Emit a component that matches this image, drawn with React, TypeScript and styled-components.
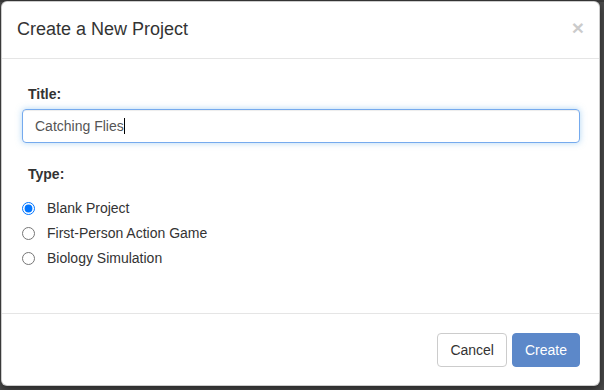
import React from 'react';
import styled, { createGlobalStyle } from 'styled-components';

const GlobalStyle = createGlobalStyle`
  html, body {
    margin: 0;
    padding: 0;
    background: #474747;
    font-family: "Liberation Sans", Arial, sans-serif;
  }
`;

const Backdrop = styled.div`
  width: 604px;
  height: 390px;
  padding: 1px 4px 0 1px;
  box-sizing: border-box;
  background: linear-gradient(#3a3a3a 0, #3a3a3a 2px, #4a4a4a 2px);
  overflow: hidden;
`;

const Modal = styled.div`
  width: 599px;
  background: #fff;
  border: 1px solid rgba(0, 0, 0, 0.2);
  border-radius: 6px;
  box-shadow: 0 3px 9px rgba(0, 0, 0, 0.5);
  box-sizing: border-box;
  color: #333;
  font-size: 14px;
  line-height: 20px;
`;

const Header = styled.div`
  display: flex;
  align-items: flex-start;
  justify-content: space-between;
  padding: 14px 15px 16px 15px;
  border-bottom: 1px solid #e5e5e5;
`;

const Title = styled.h4`
  margin: 0;
  font-size: 18px;
  font-weight: normal;
  line-height: 26px;
`;

const Close = styled.button`
  border: 0;
  background: none;
  padding: 0;
  margin-top: 1px;
  font-family: "Liberation Sans", Arial, sans-serif;
  font-size: 21px;
  font-weight: bold;
  line-height: 21px;
  color: #000;
  opacity: 0.2;
  cursor: pointer;
`;

const Body = styled.div`
  padding: 25px 19px 45px 20px;
`;

const Label = styled.label`
  display: block;
  padding-left: 6px;
  margin-bottom: ${(p: { $gap: number }) => p.$gap}px;
  font-weight: bold;
`;

const FakeInput = styled.div`
  display: flex;
  align-items: center;
  height: 34px;
  padding: 0 12px;
  box-sizing: border-box;
  border: 1px solid #75aaee;
  border-radius: 4px;
  box-shadow: inset 0 1px 1px rgba(0, 0, 0, 0.075), 0 0 6px rgba(102, 175, 233, 0.5);
  color: #555;
  margin-bottom: 21px;
`;

const Caret = styled.span`
  display: inline-block;
  width: 1px;
  height: 16px;
  background: #000;
`;

const RadioList = styled.div`
  display: flex;
  flex-direction: column;
  gap: 5px;
`;

const RadioRow = styled.label`
  display: flex;
  align-items: center;
  height: 20px;
  gap: 12px;
  cursor: pointer;
`;

const Radio = styled.input`
  width: 13px;
  height: 13px;
  margin: 0;
`;

const Footer = styled.div`
  display: flex;
  justify-content: flex-end;
  gap: 5px;
  padding: 19px 19px 18px 19px;
  border-top: 1px solid #e5e5e5;
`;

const Button = styled.button<{ $primary?: boolean }>`
  height: 34px;
  padding: 6px 12px;
  box-sizing: border-box;
  font-family: "Liberation Sans", Arial, sans-serif;
  font-size: 14px;
  line-height: 20px;
  border-radius: 4px;
  border: 1px solid ${(p) => (p.$primary ? '#5c88c9' : '#ccc')};
  background: ${(p) => (p.$primary ? '#5c88c9' : '#fff')};
  color: ${(p) => (p.$primary ? '#fff' : '#333')};
  cursor: pointer;
`;

const types = ['Blank Project', 'First-Person Action Game', 'Biology Simulation'];

export default function App() {
  return (
    <Backdrop>
      <GlobalStyle />
      <Modal>
        <Header>
          <Title>Create a New Project</Title>
          <Close>×</Close>
        </Header>
        <Body>
          <Label $gap={5}>Title:</Label>
          <FakeInput>
            Catching Flies<Caret />
          </FakeInput>
          <Label $gap={14}>Type:</Label>
          <RadioList>
            {types.map((t, i) => (
              <RadioRow key={t}>
                <Radio type="radio" name="type" defaultChecked={i === 0} />
                {t}
              </RadioRow>
            ))}
          </RadioList>
        </Body>
        <Footer>
          <Button>Cancel</Button>
          <Button $primary>Create</Button>
        </Footer>
      </Modal>
    </Backdrop>
  );
}
